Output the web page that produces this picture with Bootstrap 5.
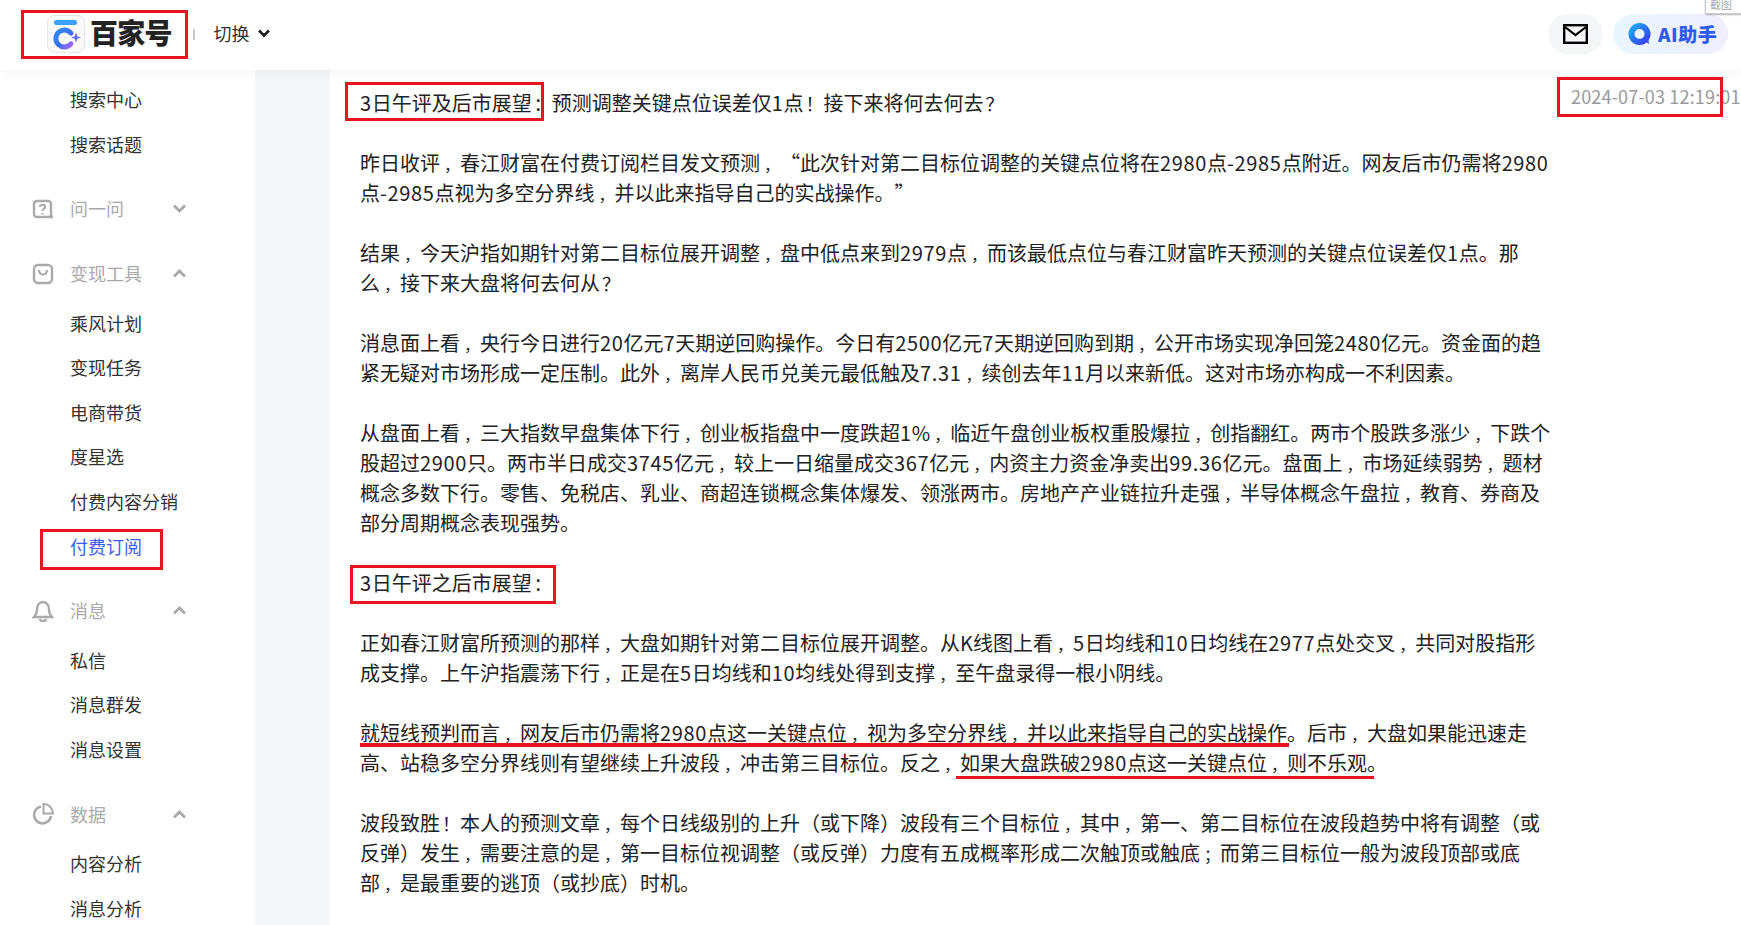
<!DOCTYPE html>
<html lang="zh-CN">

<head>
    <meta charset="UTF-8">
    <title>百家号</title>
    <link href="https://cdn.jsdelivr.net/npm/bootstrap@5.3.2/dist/css/bootstrap.min.css" rel="stylesheet">
    <style>
        html, body {
            height: 100%;
            overflow: hidden;
        }

        body {
            background: #fff;
            font-family: "Noto Sans CJK SC", "Noto Sans", sans-serif;
            position: relative;
            text-spacing-trim: space-all;
        }

        .top-bar {
            height: 70px;
            padding: 0 13px 2px 47px;
            background: #fff;
            box-shadow: 0 2px 12px rgba(0, 0, 0, .05);
            position: relative;
            z-index: 2;
        }

        .logo-name {
            font-size: 28px;
            line-height: 28px;
            font-weight: 900;
            color: #222;
            margin: 0 0 4px 5px;
            letter-spacing: -.8px;
        }

        .logo-sep {
            width: 2px;
            height: 11px;
            background: #ccc;
            margin: 0 19px 0 21px;
        }

        .switch-btn {
            font-size: 18px;
            line-height: 18px;
            color: #333;
            margin-bottom: 2px;
        }

        .mail-pill {
            width: 55px;
            height: 40px;
            border-radius: 20px;
            background: #f5f6f8;
        }

        .ai-pill {
            width: 115px;
            height: 40px;
            border-radius: 20px;
            background: linear-gradient(90deg, #e9f6ff, #f0eeff);
            margin-left: 10px;
            padding-left: 15px;
        }

        .ai-text {
            font-size: 19px;
            line-height: 19px;
            font-weight: 900;
            color: #2f5cf0;
            margin: 0 0 2px 7px;
            letter-spacing: .5px;
        }

        .page-body {
            height: 855px;
        }

        .side-menu {
            width: 255px;
            flex: none;
            padding-top: 7px;
        }

        .side-item {
            height: 44.6px;
            line-height: 44.6px;
            padding-left: 70px;
            font-size: 18px;
            color: #333;
        }

        .side-item.is-active {
            color: #3d5cf0;
        }

        .side-head {
            width: 154px;
            height: 45px;
            margin: 20px 0 4.500px 32px;
            font-size: 18px;
            color: #aaa;
        }

        .side-head svg.head-icon {
            width: 22px;
            height: 22px;
            margin-right: 16px;
        }

        .side-gutter {
            width: 75px;
            flex: none;
            background: #f5f6f8;
        }

        .article-text {
            padding: 18px 0 0 30px;
            font-size: 20px;
            line-height: 30px;
            color: #222;
            white-space: nowrap;
        }

        .article-text p {
            margin: 0 0 30px;
        }

        /* the capture centres this punctuation in its cell */
        .punct {
            font-size: .8em;
            line-height: 1;
            padding-left: .25em;
        }

        .punct-wide {
            font-size: .9em;
            line-height: 1;
            padding-left: .111em;
        }

        .num {
            letter-spacing: .65px;
        }

        .post-date {
            position: absolute;
            top: 83px;
            left: 1571px;
            font-size: 18px;
            letter-spacing: .17px;
            color: #999;
            white-space: nowrap;
            z-index: 3;
        }

        .red-box {
            position: absolute;
            border: 3px solid #e8141f;
            z-index: 4;
        }

        .box-logo { left: 21px; top: 10px; width: 167px; height: 49px; }
        .box-paid { left: 40px; top: 529px; width: 123px; height: 41px; }
        .box-title { left: 345px; top: 82px; width: 199px; height: 39px; }
        .box-title2 { left: 350px; top: 565px; width: 206px; height: 39px; }
        .box-date { left: 1557px; top: 77px; width: 166px; height: 40px; }

        .red-stroke {
            position: absolute;
            background: #e8141f;
            z-index: 4;
        }

        .stroke-one { left: 360px; top: 743px; width: 929px; height: 4px; }
        .stroke-two { left: 956px; top: 776px; width: 418px; height: 3px; }

        .shot-tip {
            position: absolute;
            left: 1705px;
            top: -4px;
            width: 40px;
            height: 18px;
            font-size: 11px;
            line-height: 14px;
            color: #aaa;
            background: #fff;
            border: 1px solid #ccc;
            border-radius: 2px;
            box-shadow: 0 1px 2px rgba(0, 0, 0, .3);
            padding-left: 4px;
            z-index: 5;
        }
    </style>
</head>

<body>
    <!-- Top bar -->
    <header class="top-bar d-flex align-items-center">
        <svg width="38" height="38" viewBox="0 0 38 38">
            <defs>
                <linearGradient id="logoGrad" x1="0" y1="0" x2="1" y2="1">
                    <stop offset="0" stop-color="#2f8cf6" />
                    <stop offset=".6" stop-color="#3f6cf2" />
                    <stop offset="1" stop-color="#a66af0" />
                </linearGradient>
            </defs>
            <rect x=".5" y=".5" width="37" height="37" rx="7" fill="#fafafa" stroke="#e4e4e4" />
            <rect x="7" y="5" width="23" height="5" rx="2.5" fill="#3aa0fa" />
            <path d="M24 18.2A8.5 8.5 0 1 0 24 28.8" fill="none" stroke="url(#logoGrad)" stroke-width="5" stroke-linecap="round" />
            <path d="M29 17.5l1.3 3.7 3.7 1.3-3.7 1.3-1.3 3.7-1.3-3.7-3.7-1.3 3.7-1.3z" fill="#6a6cf0" />
        </svg>
        <span class="logo-name">百家号</span>
        <span class="logo-sep"></span>
        <span class="switch-btn d-flex align-items-center gap-2">切换
            <svg width="12" height="9" viewBox="0 0 12 9"><path d="M1 1.500l5 5 5-5" fill="none" stroke="#222" stroke-width="2.800" /></svg>
        </span>
        <div class="ms-auto d-flex align-items-center">
            <div class="mail-pill d-flex align-items-center justify-content-center">
                <svg width="25" height="20" viewBox="0 0 25 20"><rect x="1.2" y="1.2" width="22.6" height="17.6" fill="none" stroke="#000" stroke-width="2.4" /><path d="M2 3l10.5 8L23 3" fill="none" stroke="#000" stroke-width="2.2" /></svg>
            </div>
            <div class="ai-pill d-flex align-items-center">
                <svg width="23" height="22" viewBox="0 0 23 22">
                    <defs>
                        <linearGradient id="aiGrad" x1="0" y1="0" x2="1" y2="1">
                            <stop offset="0" stop-color="#1fa8f5" />
                            <stop offset="1" stop-color="#3a3cf0" />
                        </linearGradient>
                    </defs>
                    <circle cx="11.5" cy="11" r="8" fill="none" stroke="url(#aiGrad)" stroke-width="6" />
                    <path d="M15 17l6 4-1-7z" fill="#3a4cf0" />
                </svg>
                <span class="ai-text">AI助手</span>
            </div>
        </div>
    </header>

    <div class="page-body d-flex">
        <!-- Side menu -->
        <aside class="side-menu">
            <div class="side-item">搜索中心</div>
            <div class="side-item">搜索话题</div>

            <div class="side-head d-flex align-items-center">
                <svg class="head-icon" viewBox="0 0 22 22"><path d="M16 19H5a3 3 0 0 1-3-3V6a3 3 0 0 1 3-3h11a3 3 0 0 1 3 3v11c0 1 .8 2 2 2h-5z" fill="none" stroke="#aaa" stroke-width="2.400" /><path d="M8 9c0-3 5-3 5 0 0 2-2.500 2-2.500 4M10.500 15v1.500" fill="none" stroke="#aaa" stroke-width="2.200" /></svg>
                <span>问一问</span>
                <svg class="ms-auto" width="13" height="9" viewBox="0 0 13 9"><path d="M1 1.500l5.500 5.500L12 1.500" fill="none" stroke="#aaa" stroke-width="2.800" /></svg>
            </div>

            <div class="side-head d-flex align-items-center">
                <svg class="head-icon" viewBox="0 0 22 22"><rect x="2" y="2" width="18" height="18" rx="4" fill="none" stroke="#aaa" stroke-width="2.400" /><path d="M7 7c0 6 8 6 8 0" fill="none" stroke="#aaa" stroke-width="2.200" /></svg>
                <span>变现工具</span>
                <svg class="ms-auto" width="13" height="9" viewBox="0 0 13 9"><path d="M1 7.500l5.500-5.500L12 7.500" fill="none" stroke="#aaa" stroke-width="2.800" /></svg>
            </div>
            <div class="side-item">乘风计划</div>
            <div class="side-item">变现任务</div>
            <div class="side-item">电商带货</div>
            <div class="side-item">度星选</div>
            <div class="side-item">付费内容分销</div>
            <div class="side-item is-active">付费订阅</div>

            <div class="side-head d-flex align-items-center">
                <svg class="head-icon" viewBox="0 0 22 22"><path d="M2 17h18c-2-2-3-4-3-7.500C17 5 14.500 2 11 2S5 5 5 9.500C5 13 4 15 2 17z" fill="none" stroke="#aaa" stroke-width="2.400" /><path d="M7.500 19c1 2.500 6 2.500 7 0" fill="none" stroke="#aaa" stroke-width="2.200" /></svg>
                <span>消息</span>
                <svg class="ms-auto" width="13" height="9" viewBox="0 0 13 9"><path d="M1 7.500l5.500-5.500L12 7.500" fill="none" stroke="#aaa" stroke-width="2.800" /></svg>
            </div>
            <div class="side-item">私信</div>
            <div class="side-item">消息群发</div>
            <div class="side-item">消息设置</div>

            <div class="side-head d-flex align-items-center">
                <svg class="head-icon" viewBox="0 0 22 22"><path d="M9 3.500A8.500 8.500 0 1 0 19 13" fill="none" stroke="#aaa" stroke-width="2.600" /><path d="M11.500 1a9.500 9.500 0 0 1 9.500 9.500h-9.500z" fill="none" stroke="#aaa" stroke-width="2" /></svg>
                <span>数据</span>
                <svg class="ms-auto" width="13" height="9" viewBox="0 0 13 9"><path d="M1 7.500l5.500-5.500L12 7.500" fill="none" stroke="#aaa" stroke-width="2.800" /></svg>
            </div>
            <div class="side-item">内容分析</div>
            <div class="side-item">消息分析</div>
        </aside>

        <div class="side-gutter"></div>

        <!-- Article -->
        <main class="article-text flex-grow-1" id="article">
            <p>3日午评及后市展望：预测调整关键点位误差仅1点！接下来将何去何去？</p>
            <p>昨日收评，春江财富在付费订阅栏目发文预测，“此次针对第二目标位调整的关键点位将在2980点-2985点附近。网友后市仍需将2980<br>点-2985点视为多空分界线，并以此来指导自己的实战操作。”</p>
            <p>结果，今天沪指如期针对第二目标位展开调整，盘中低点来到2979点，而该最低点位与春江财富昨天预测的关键点位误差仅1点。那<br>么，接下来大盘将何去何从？</p>
            <p>消息面上看，央行今日进行20亿元7天期逆回购操作。今日有2500亿元7天期逆回购到期，公开市场实现净回笼2480亿元。资金面的趋<br>紧无疑对市场形成一定压制。此外，离岸人民币兑美元最低触及7.31，续创去年11月以来新低。这对市场亦构成一不利因素。</p>
            <p>从盘面上看，三大指数早盘集体下行，创业板指盘中一度跌超1%，临近午盘创业板权重股爆拉，创指翻红。两市个股跌多涨少，下跌个<br>股超过2900只。两市半日成交3745亿元，较上一日缩量成交367亿元，内资主力资金净卖出99.36亿元。盘面上，市场延续弱势，题材<br>概念多数下行。零售、免税店、乳业、商超连锁概念集体爆发、领涨两市。房地产产业链拉升走强，半导体概念午盘拉，教育、券商及<br>部分周期概念表现强势。</p>
            <p>3日午评之后市展望：</p>
            <p>正如春江财富所预测的那样，大盘如期针对第二目标位展开调整。从K线图上看，5日均线和10日均线在2977点处交叉，共同对股指形<br>成支撑。上午沪指震荡下行，正是在5日均线和10均线处得到支撑，至午盘录得一根小阴线。</p>
            <p>就短线预判而言，网友后市仍需将2980点这一关键点位，视为多空分界线，并以此来指导自己的实战操作。后市，大盘如果能迅速走<br>高、站稳多空分界线则有望继续上升波段，冲击第三目标位。反之，如果大盘跌破2980点这一关键点位，则不乐观。</p>
            <p>波段致胜！本人的预测文章，每个日线级别的上升（或下降）波段有三个目标位，其中，第一、第二目标位在波段趋势中将有调整（或<br>反弹）发生，需要注意的是，第一目标位视调整（或反弹）力度有五成概率形成二次触顶或触底；而第三目标位一般为波段顶部或底<br>部，是最重要的逃顶（或抄底）时机。</p>
        </main>
    </div>

    <span class="post-date">2024-07-03 12:19:01</span>
    <div class="shot-tip">截图</div>

    <!-- Red annotations drawn over the capture -->
    <div class="red-box box-logo"></div>
    <div class="red-box box-paid"></div>
    <div class="red-box box-title"></div>
    <div class="red-box box-title2"></div>
    <div class="red-box box-date"></div>
    <div class="red-stroke stroke-one"></div>
    <div class="red-stroke stroke-two"></div>

    <script src="https://cdn.jsdelivr.net/npm/bootstrap@5.3.2/dist/js/bootstrap.bundle.min.js"></script>
    <script>
        document.querySelectorAll('#article p').forEach((p) => {
            p.innerHTML = p.innerHTML
                .replace(/-?[\d.]*\d/g, '<span class="num">$&</span>')
                .replace(/[，；]/g, '<span class="punct">$&</span>')
                .replace(/[：！？]/g, '<span class="punct-wide">$&</span>');
        });
    </script>
</body>

</html>
